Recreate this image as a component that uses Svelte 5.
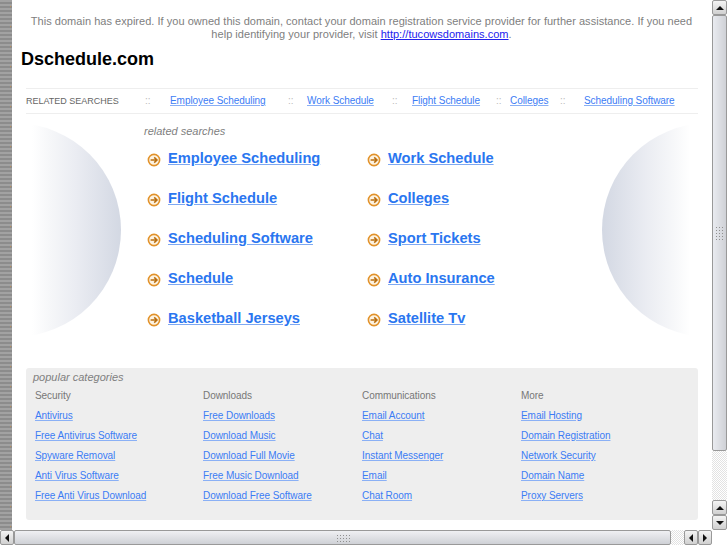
<script>
  const topLinks = ['Employee Scheduling', 'Work Schedule', 'Flight Schedule', 'Colleges', 'Scheduling Software']

  const results = [
    ['Employee Scheduling', 'Work Schedule'],
    ['Flight Schedule', 'Colleges'],
    ['Scheduling Software', 'Sport Tickets'],
    ['Schedule', 'Auto Insurance'],
    ['Basketball Jerseys', 'Satellite Tv']
  ]

  const categories = [
    { title: 'Security', links: ['Antivirus', 'Free Antivirus Software', 'Spyware Removal', 'Anti Virus Software', 'Free Anti Virus Download'] },
    { title: 'Downloads', links: ['Free Downloads', 'Download Music', 'Download Full Movie', 'Free Music Download', 'Download Free Software'] },
    { title: 'Communications', links: ['Email Account', 'Chat', 'Instant Messenger', 'Email', 'Chat Room'] },
    { title: 'More', links: ['Email Hosting', 'Domain Registration', 'Network Security', 'Domain Name', 'Proxy Servers'] }
  ]
</script>

<div class="window">
  <div class="body">
    <div class="stripe"></div>

    <main class="page">
      <p class="notice">
        This domain has expired. If you owned this domain, contact your domain registration service provider for further assistance. If you need help identifying your provider, visit <a href="#top">http://tucowsdomains.com</a>.
      </p>

      <h1>Dschedule.com</h1>

      <nav class="related">
        <span class="related-label">RELATED SEARCHES</span>
        {#each topLinks as link}
          <span class="dots">::</span>
          <a href="#top">{link}</a>
        {/each}
      </nav>

      <section class="results">
        <svg class="ball" width="89" height="214" viewBox="0 0 89 214">
          <defs>
            <linearGradient id="ball-left" gradientUnits="userSpaceOnUse" x1="0" y1="0" x2="89" y2="0">
              <stop offset="0" stop-color="#ffffff" />
              <stop offset="0.2" stop-color="#f6f7f9" />
              <stop offset="0.5" stop-color="#eaecf2" />
              <stop offset="1" stop-color="#d3d8e3" />
            </linearGradient>
          </defs>
          <circle cx="-18" cy="107" r="107" fill="url(#ball-left)" />
        </svg>

        <div class="results-main">
          <div class="results-title">related searches</div>
          <div class="results-grid">
            {#each results as row}
              {#each row as link}
                <div class="result">
                  <svg class="arrow" width="14" height="14" viewBox="0 0 14 14">
                    <circle cx="7" cy="7" r="5.6" fill="#fdf3e2" stroke="#e2922a" stroke-width="1.6" />
                    <path d="M3.6 7H9.6M7.2 4.4L10 7L7.2 9.6" fill="none" stroke="#b96f10" stroke-width="1.5" />
                  </svg>
                  <a href="#top">{link}</a>
                </div>
              {/each}
            {/each}
          </div>
        </div>

        <svg class="ball" width="88" height="214" viewBox="0 0 88 214">
          <defs>
            <linearGradient id="ball-right" gradientUnits="userSpaceOnUse" x1="0" y1="0" x2="88" y2="0">
              <stop offset="0" stop-color="#d3d8e3" />
              <stop offset="0.5" stop-color="#eaecf2" />
              <stop offset="0.8" stop-color="#f6f7f9" />
              <stop offset="1" stop-color="#ffffff" />
            </linearGradient>
          </defs>
          <circle cx="107" cy="107" r="107" fill="url(#ball-right)" />
        </svg>
      </section>

      <section class="popular">
        <div class="popular-title">popular categories</div>
        <div class="popular-grid">
          {#each categories as cat}
            <div class="cat">
              <div class="cat-title">{cat.title}</div>
              {#each cat.links as link}
                <a href="#top">{link}</a>
              {/each}
            </div>
          {/each}
        </div>
      </section>
    </main>

    <div class="vscroll">
      <div class="btn"><span class="tri up"></span></div>
      <div class="thumb v"><span class="grip"></span></div>
      <div class="track"></div>
      <div class="btn"><span class="tri up"></span></div>
      <div class="btn"><span class="tri down"></span></div>
    </div>
  </div>

  <div class="hscroll">
    <div class="btn"><span class="tri left"></span></div>
    <div class="thumb h"><span class="grip"></span></div>
    <div class="track"></div>
    <div class="btn"><span class="tri left"></span></div>
    <div class="btn"><span class="tri right"></span></div>
    <div class="corner"></div>
  </div>
</div>

<style>
  :global(body) {
    margin: 0;
    background: #fff;
  }

  .window {
    width: 727px;
    height: 545px;
    display: flex;
    flex-direction: column;
    overflow: hidden;
    font-family: 'Liberation Sans', Arial, sans-serif;
  }

  .body {
    display: flex;
    height: 530px;
  }

  .stripe {
    width: 12px;
    flex: none;
    background:
      repeating-linear-gradient(180deg, #bd8f58 0 1px, transparent 1px 20px) 10px 6px / 1px 100% no-repeat,
      repeating-linear-gradient(180deg, #a2a2a2 0, #a2a2a2 2px, #8c8c8c 2px, #8c8c8c 4px);
  }

  .page {
    width: 700px;
    flex: none;
    overflow: hidden;
  }

  .notice {
    margin: 0;
    padding: 15px 15px 1px 14px;
    font-size: 11px;
    line-height: 13px;
    letter-spacing: 0.03px;
    text-align: center;
    color: #808080;
  }
  .notice a {
    color: #2222ee;
  }

  h1 {
    margin: 6px 0 0 9px;
    font-size: 18px;
    line-height: 22px;
    font-weight: bold;
    color: #000;
  }

  .related {
    margin: 18px 0 0 14px;
    width: 672px;
    height: 23px;
    padding-bottom: 1px;
    border-top: 1px solid #eee;
    border-bottom: 1px solid #eee;
    display: grid;
    grid-template-columns: 119px 25px 118px 19px 85px 20px 84px 14px 50px 24px 1fr;
    align-items: center;
    font-size: 10px;
    letter-spacing: -0.06px;
    white-space: nowrap;
  }
  .related a {
    color: #3b7cf5;
    text-decoration-color: #8ab0f5;
  }
  .related-label {
    font-size: 9px;
    letter-spacing: 0;
    color: #666;
  }
  .dots {
    color: #bbb;
  }

  .results {
    margin: 9px 0 0 20px;
    display: flex;
    height: 214px;
  }
  .ball {
    flex: none;
  }
  .results-main {
    width: 481px;
    padding-left: 23px;
    box-sizing: border-box;
  }
  .results-title {
    font-size: 11px;
    line-height: 13px;
    font-style: italic;
    color: #808080;
    margin-top: 2px;
  }
  .results-grid {
    display: grid;
    grid-template-columns: 220px 1fr;
    grid-auto-rows: 40px;
  }
  .result {
    display: flex;
    align-items: center;
    height: 40px;
    padding-left: 3px;
    gap: 7px;
  }
  .result a {
    font-size: 14.67px;
    font-weight: bold;
    color: #2a76f0;
    text-decoration-color: #7fa9f2;
  }
  .arrow {
    flex: none;
    margin-top: 4px;
  }

  .popular {
    margin: 31px 0 0 14px;
    width: 672px;
    height: 152px;
    background: #eee;
    border-radius: 3px;
    box-sizing: border-box;
    padding: 3px 0 0 7px;
  }
  .popular-title {
    font-size: 11px;
    line-height: 13px;
    font-style: italic;
    color: #808080;
  }
  .popular-grid {
    margin-top: 2px;
    padding-left: 2px;
    display: grid;
    grid-template-columns: 168px 159px 159px 1fr;
  }
  .cat {
    display: flex;
    flex-direction: column;
    align-items: flex-start;
    font-size: 10px;
    letter-spacing: -0.06px;
    line-height: 20px;
  }
  .cat-title {
    color: #777;
  }
  .cat a {
    color: #3b7cf5;
    text-decoration-color: #8ab0f5;
  }

  .vscroll {
    width: 15px;
    flex: none;
    display: flex;
    flex-direction: column;
  }
  .hscroll {
    height: 15px;
    flex: none;
    display: flex;
  }
  .btn {
    flex: none;
    width: 15px;
    height: 15px;
    box-sizing: border-box;
    border: 1px solid #999;
    border-radius: 2px;
    background: linear-gradient(180deg, #f4f4f4, #d0d0d0);
    display: flex;
    align-items: center;
    justify-content: center;
  }
  .hscroll .btn {
    width: 14px;
  }
  .thumb {
    flex: none;
    box-sizing: border-box;
    border: 1px solid #999;
    border-radius: 2px;
    display: flex;
    align-items: center;
    justify-content: center;
  }
  .thumb.v {
    height: 436px;
    background: linear-gradient(90deg, #e9ebf0, #cfd1d6);
  }
  .thumb.h {
    width: 657px;
    background: linear-gradient(180deg, #eff0f3, #cfd1d6);
  }
  .grip {
    width: 14px;
    height: 8px;
    background-image: radial-gradient(circle, #8f8f8f 0.7px, transparent 0.8px);
    background-size: 3px 3px;
  }
  .vscroll .grip {
    width: 9px;
    height: 14px;
  }
  .track {
    flex: 1;
    background: repeating-conic-gradient(#e2e2e2 0 25%, #fff 0 50%) 0 0 / 2px 2px;
  }
  .corner {
    width: 15px;
    flex: none;
    background: #fff;
  }

  .tri {
    width: 0;
    height: 0;
    border: 4px solid transparent;
  }
  .tri.up {
    border-top: 0;
    border-bottom: 4px solid #111;
  }
  .tri.down {
    border-bottom: 0;
    border-top: 4px solid #111;
  }
  .tri.left {
    border-left: 0;
    border-right: 4px solid #111;
  }
  .tri.right {
    border-right: 0;
    border-left: 4px solid #111;
  }
</style>
